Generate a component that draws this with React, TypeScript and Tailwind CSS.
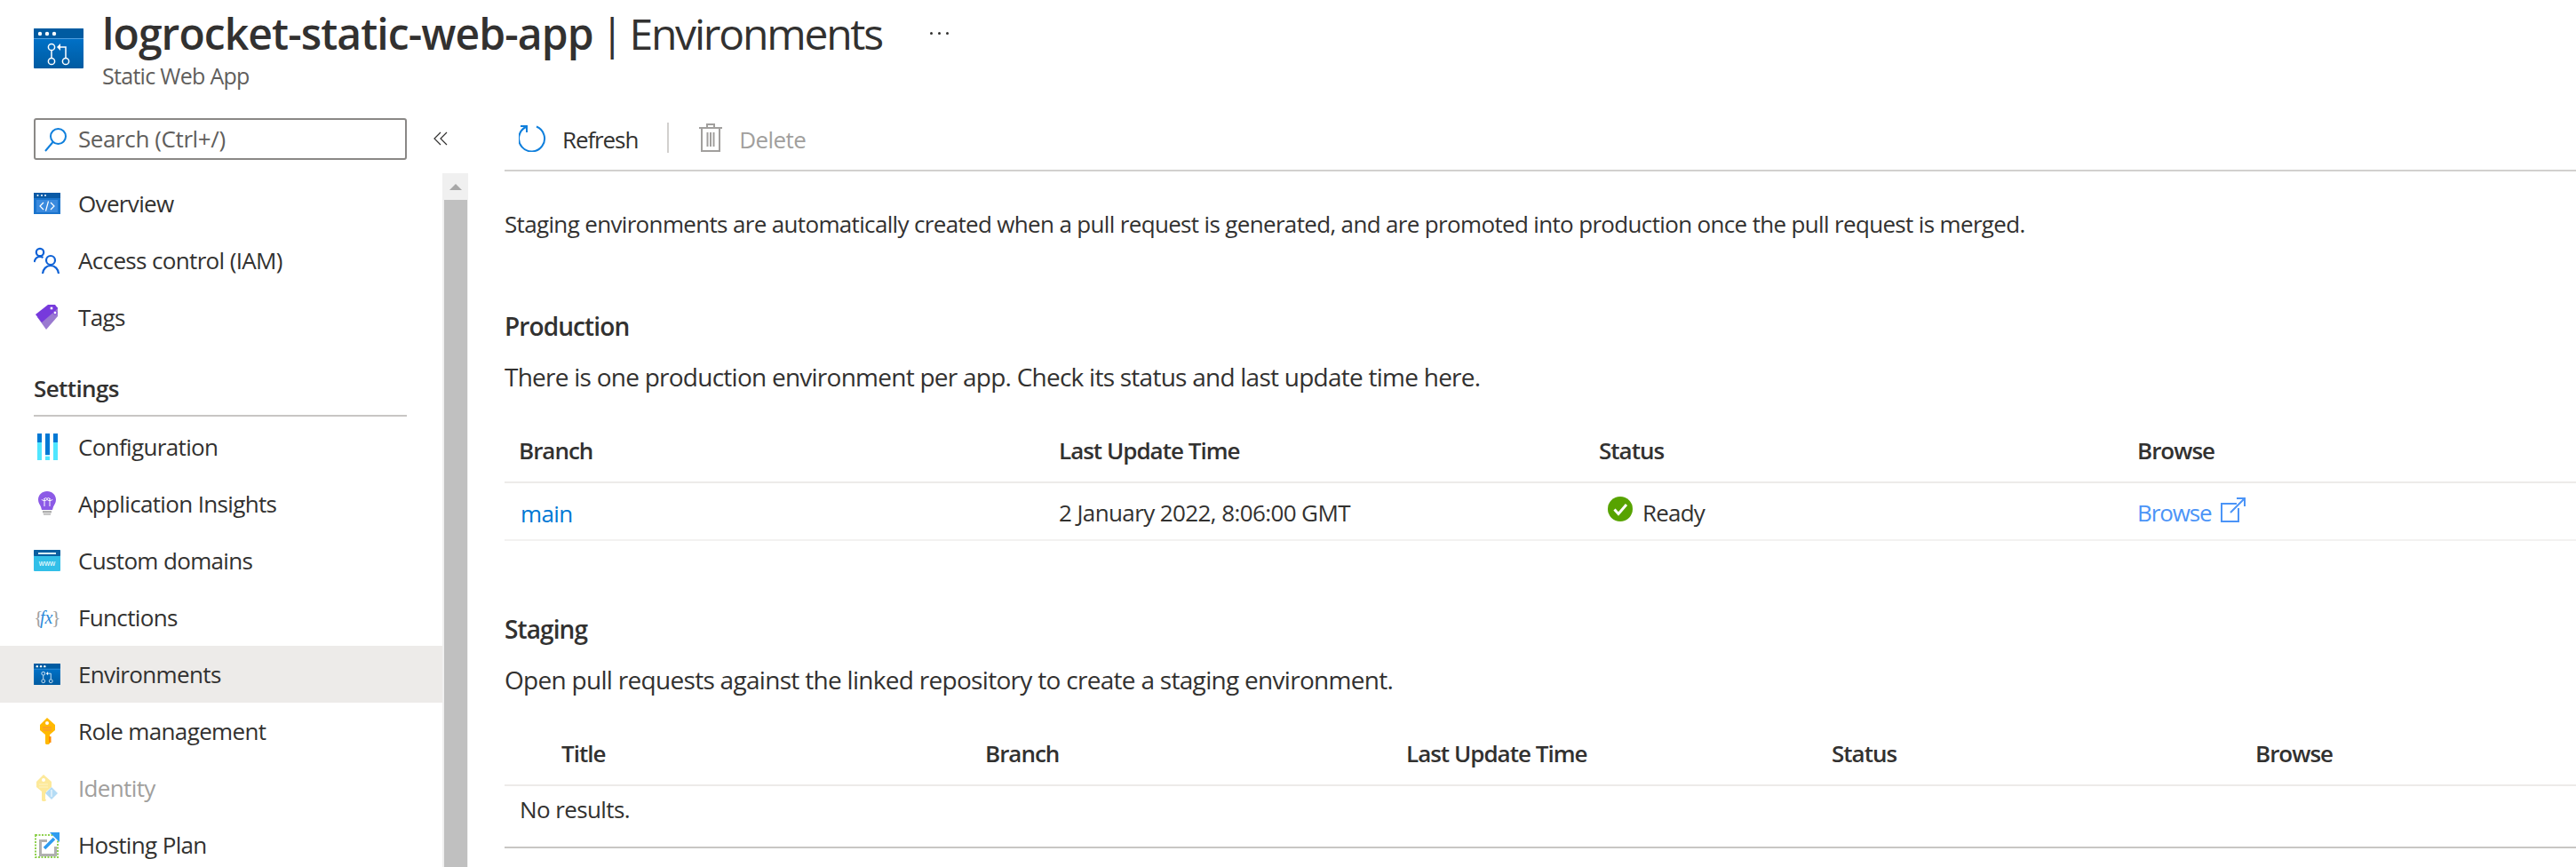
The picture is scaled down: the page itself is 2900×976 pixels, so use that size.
import React from "react";

const font = "font-['Open_Sans','Noto_Sans',sans-serif]";

const WindowBase: React.FC<{ children: React.ReactNode; grad: string }> = ({ children, grad }) => (
  <svg viewBox="0 0 56 45" className="w-full h-full">
    <defs>
      <linearGradient id={grad} x1="0" y1="0" x2="0" y2="1">
        <stop offset="0" stopColor="#0078d4" />
        <stop offset="1" stopColor="#005ba1" />
      </linearGradient>
    </defs>
    <rect x="0" y="0" width="56" height="45" rx="1" fill={`url(#${grad})`} />
    <rect x="0" y="0" width="56" height="11" rx="1" fill="#005ba1" />
    <rect x="0" y="11" width="56" height="1" fill="#50a0e0" />
    <circle cx="7" cy="6" r="2.200" fill="#fff" />
    <circle cx="15" cy="6" r="2.200" fill="#fff" />
    <circle cx="23" cy="6" r="2.200" fill="#fff" />
    {children}
  </svg>
);

const PullRequest = () => (
  <g fill="none" stroke="#fff" strokeWidth="1.5">
    <circle cx="20" cy="21" r="3.6" />
    <circle cx="20" cy="37" r="3.6" />
    <circle cx="36" cy="37" r="3.6" />
    <path d="M20 25v8M36 33V21h-9" />
    <path d="M30 17l-4 4 4 4" fill="#fff" stroke="none" />
  </g>
);

const EnvIcon: React.FC<{ id: string }> = ({ id }) => (
  <WindowBase grad={id}>
    <PullRequest />
  </WindowBase>
);

const OverviewIcon = () => (
  <svg viewBox="0 0 30 24" className="w-full h-full">
    <rect width="30" height="24" fill="#1b74cc" />
    <rect width="30" height="6" fill="#0a5aa6" />
    <rect x="3" y="8" width="24" height="14" fill="#3a8ade" />
    <circle cx="4.500" cy="3" r="1" fill="#fff" />
    <circle cx="9" cy="3" r="1" fill="#fff" />
    <circle cx="13" cy="3" r="1" fill="#fff" />
    <path d="M11 11l-4 4 4 4M19 11l4 4-4 4M16.500 9.500l-3 11" fill="none" stroke="#fff" strokeWidth="1.2" />
  </svg>
);

const AccessIcon = () => (
  <svg viewBox="0 0 30 30" className="w-full h-full" fill="none" stroke="#0f62d6" strokeWidth="2.2">
    <circle cx="7" cy="6" r="4.200" />
    <path d="M0.500 17c1-4 3-6 6.500-6 1.500 0 2.500.3 3.500 1" />
    <circle cx="19" cy="15" r="5" />
    <path d="M10 30c.5-5 4-9 9-9s8.500 4 9 9" />
  </svg>
);

const TagsIcon = () => (
  <svg viewBox="0 0 30 30" className="w-full h-full">
    <path d="M4 15L17 4h10v10L14 29z" fill="#9a7ad0" />
    <path d="M2 12L16 1h8l3 4-3 3L9 21z" fill="#773adc" />
    <circle cx="20" cy="5" r="2" fill="#fff" stroke="#773adc" />
    <circle cx="24" cy="10" r="2" fill="#fff" stroke="#773adc" />
  </svg>
);

const ConfigIcon = () => (
  <svg viewBox="0 0 30 30" className="w-full h-full">
    <rect x="4" y="0" width="5" height="30" fill="#50e6ff" />
    <rect x="4" y="0" width="5" height="10" fill="#0078d4" />
    <rect x="13" y="0" width="5" height="24" fill="#0078d4" />
    <rect x="13" y="24" width="5" height="2" fill="#c3f1ff" />
    <rect x="13" y="26" width="5" height="4" fill="#50e6ff" />
    <rect x="22" y="0" width="5" height="30" fill="#50e6ff" />
    <rect x="22" y="0" width="5" height="10" fill="#0078d4" />
  </svg>
);

const InsightsIcon = () => (
  <svg viewBox="0 0 30 30" className="w-full h-full">
    <path d="M15 1c-5.500 0-10 4-10 9.500 0 3.500 2 5.500 3 8 .5 1.200.5 2.500 1 3.500h12c.5-1 .5-2.300 1-3.500 1-2.500 3-4.500 3-8C25 5 20.500 1 15 1z" fill="#8c5ae6" />
    <path d="M12 9v9M18 9v9M9 10c0 2 6 2 6 0s-3-2-3 0M21 10c0 2-6 2-6 0s3-2 3 0" fill="none" stroke="#fff" strokeWidth="1" />
    <rect x="10" y="23" width="10" height="2.500" fill="#b0b0b0" />
    <rect x="11" y="26" width="8" height="2" fill="#c8c8c8" />
  </svg>
);

const DomainsIcon = () => (
  <svg viewBox="0 0 30 24" className="w-full h-full">
    <rect width="30" height="24" rx="1" fill="#32bfe8" />
    <rect width="30" height="7" rx="1" fill="#0a5fa0" />
    <rect x="5" y="3" width="20" height="2" fill="#d8eefa" />
    <text x="15" y="18" textAnchor="middle" fontSize="8.500" fill="#fff" fontFamily="'Liberation Sans',sans-serif">www</text>
  </svg>
);

const FunctionsIcon = () => (
  <svg viewBox="0 0 30 26" className="w-full h-full">
    <text x="0" y="20" fontSize="22" fill="#a0a0a0" fontFamily="'Liberation Serif',serif">{"{"}</text>
    <text x="20" y="20" fontSize="22" fill="#a0a0a0" fontFamily="'Liberation Serif',serif">{"}"}</text>
    <text x="7" y="20" fontSize="20" fontStyle="italic" fill="#2b88d8" fontFamily="'Liberation Serif',serif">fx</text>
  </svg>
);

const KeyShape: React.FC<{ light?: boolean }> = ({ light }) => (
  <g>
    <path d="M13 0l9 8v6l-6 5v10l-3 2-2-2V19L5 14V8z" fill={light ? "#fde99a" : "#ffb900"} />
    <circle cx="13" cy="6" r="2" fill="#fff" />
    <path d="M8 11h10M8 14h10" stroke={light ? "#fdf3c4" : "#f7894a"} strokeWidth="1.2" />
    <rect x="15" y="21" width="2.500" height="7" fill={light ? "#fff" : "#ff8c00"} />
  </g>
);

const RoleIcon = () => (
  <svg viewBox="0 0 30 30" className="w-full h-full"><g transform="translate(2 0)"><KeyShape /></g></svg>
);

const IdentityIcon = () => (
  <svg viewBox="0 0 30 30" className="w-full h-full">
    <g transform="translate(-2 0)"><KeyShape light /></g>
    <path d="M20 14l7 7-7 7-7-7z" fill="#b5dcf5" />
    <path d="M20 17v8" stroke="#fff" strokeWidth="1" />
  </svg>
);

const HostingIcon = () => (
  <svg viewBox="0 0 30 30" className="w-full h-full">
    <rect x="2" y="4" width="25" height="25" fill="none" stroke="#8fd14f" strokeWidth="2" strokeDasharray="2 1.500" />
    <path d="M6 9h9v3H9v13h14v-8h3v11H6z" fill="#b0b0b0" />
    <path d="M12 19l11-11" stroke="#2f9cf0" strokeWidth="3.500" />
    <path d="M18 1h11v11z" fill="#2f9cf0" />
  </svg>
);

type NavItem = { label: string; icon: React.ReactNode; h?: string; active?: boolean; disabled?: boolean };

const topItems: NavItem[] = [
  { label: "Overview", icon: <OverviewIcon />, h: "h-[24px]" },
  { label: "Access control (IAM)", icon: <AccessIcon />, h: "h-[30px]" },
  { label: "Tags", icon: <TagsIcon />, h: "h-[30px]" },
];

const settingsItems: NavItem[] = [
  { label: "Configuration", icon: <ConfigIcon />, h: "h-[30px]" },
  { label: "Application Insights", icon: <InsightsIcon />, h: "h-[30px]" },
  { label: "Custom domains", icon: <DomainsIcon />, h: "h-[24px]" },
  { label: "Functions", icon: <FunctionsIcon />, h: "h-[26px]" },
  { label: "Environments", icon: <EnvIcon id="navenv" />, h: "h-[24px]", active: true },
  { label: "Role management", icon: <RoleIcon />, h: "h-[30px]" },
  { label: "Identity", icon: <IdentityIcon />, h: "h-[30px]", disabled: true },
  { label: "Hosting Plan", icon: <HostingIcon />, h: "h-[30px]" },
];

const NavRow: React.FC<{ item: NavItem }> = ({ item }) => (
  <div className={`h-16 shrink-0 flex items-center pl-[38px] ${item.active ? "bg-[#edebe9]" : ""}`}>
    <span className={`w-[30px] shrink-0 ${item.h}`}>{item.icon}</span>
    <span className={`ml-[20px] text-[26px] tracking-[-0.65px] ${item.disabled ? "text-[#a19f9d]" : "text-[#323130]"}`}>
      {item.label}
    </span>
  </div>
);

const Sidebar = () => (
  <aside className="w-[527px] shrink-0 flex flex-col">
    <div className="h-[62px] flex items-start pl-[38px]">
      <div className="w-[420px] h-[47px] border-2 border-[#8a8886] rounded-[3px] flex items-center pl-[10px]">
        <svg viewBox="0 0 26 28" className="w-[26px] h-[28px]" fill="none" stroke="#0f7fdc" strokeWidth="2">
          <circle cx="15.500" cy="10.500" r="8.500" />
          <path d="M9.500 17L1 27" />
        </svg>
        <span className="ml-[12px] text-[26px] tracking-[-0.4px] text-[#605e5c]">Search (Ctrl+/)</span>
      </div>
      <svg viewBox="0 0 16 16" className="ml-[30px] mt-[15px] w-[16px] h-[16px]" fill="none" stroke="#323130" strokeWidth="1.2">
        <path d="M8 1L1 8l7 7M15 1L8 8l7 7" />
      </svg>
    </div>
    <div className="flex flex-1 min-h-0">
      <nav className="w-[498px] shrink-0 pt-[2px] overflow-hidden">
        {topItems.map((item) => (
          <NavRow key={item.label} item={item} />
        ))}
        <div className="ml-[38px] mr-[40px] h-[82px] flex flex-col justify-end pb-[2px]">
          <div className="text-[26px] tracking-[-0.6px] font-semibold text-[#323130] pb-[10px] border-b-2 border-[#c8c6c4]">
            Settings
          </div>
        </div>
        {settingsItems.map((item) => (
          <NavRow key={item.label} item={item} />
        ))}
      </nav>
      <div className="w-[29px] shrink-0 bg-[#f0f0f0] flex flex-col">
        <div className="h-[30px] flex items-center justify-center">
          <div className="w-0 h-0 border-x-[7px] border-x-transparent border-b-[7px] border-b-[#a8a8a8]" />
        </div>
        <div className="flex-1 ml-[2px] mr-[1px] bg-[#c0c0c0]" />
      </div>
    </div>
  </aside>
);

const Th: React.FC<{ children: React.ReactNode }> = ({ children }) => (
  <div className="pl-[16px] text-[26px] tracking-[-1px] font-semibold text-[#323130]">{children}</div>
);

const Production = () => (
  <section className="mt-[77px]">
    <h2 className="text-[28px] leading-[38px] tracking-[-0.9px] font-semibold text-[#323130]">Production</h2>
    <p className="mt-[19px] text-[28px] leading-[38px] tracking-[-0.75px] text-[#323130]">
      There is one production environment per app. Check its status and last update time here.
    </p>
    <div className="mt-[40px] h-[61px] grid grid-cols-[608px_608px_606px_1fr] items-center pb-[10px] border-b-2 border-[#edebe9]">
      <Th>Branch</Th>
      <Th>Last Update Time</Th>
      <Th>Status</Th>
      <Th>Browse</Th>
    </div>
    <div className="h-[65px] grid grid-cols-[608px_608px_606px_1fr] items-center pt-[4px] border-b-2 border-[#f3f2f1] text-[26px] tracking-[-0.6px] text-[#323130]">
      <a className="pl-[18px] mt-[2px] text-[#0078d4]">main</a>
      <div className="pl-[16px]">2 January 2022, 8:06:00 GMT</div>
      <div className="pl-[26px] flex items-center">
        <svg viewBox="0 0 28 28" className="w-[28px] h-[28px] -mt-[9px]">
          <circle cx="14" cy="14" r="14" fill="#57a300" />
          <path d="M7.500 14.500l4.500 5 9-10.500" fill="none" stroke="#fff" strokeWidth="3" />
        </svg>
        <span className="ml-[11px] tracking-[-0.8px]">Ready</span>
      </div>
      <div className="pl-[16px] flex items-center text-[#4b94f7]">
        <span className="tracking-[-1.1px]">Browse</span>
        <svg viewBox="0 0 28 28" className="ml-[10px] w-[28px] h-[28px] -mt-[7px]" fill="none" stroke="#4b94f7" strokeWidth="2">
          <path d="M18 7H1v20h19V12" />
          <path d="M11 17L27 1M18 1h9v9" />
        </svg>
      </div>
    </div>
  </section>
);

const Staging = () => (
  <section className="mt-[80px]">
    <h2 className="text-[28px] leading-[38px] tracking-[-0.9px] font-semibold text-[#323130]">Staging</h2>
    <p className="mt-[19px] text-[28px] leading-[38px] tracking-[-0.7px] text-[#323130]">
      Open pull requests against the linked repository to create a staging environment.
    </p>
    <div className="mt-[40px] h-[61px] grid grid-cols-[477px_474px_479px_477px_1fr] items-center pb-[10px] border-b-2 border-[#edebe9] pl-[48px]">
      <Th>Title</Th>
      <Th>Branch</Th>
      <Th>Last Update Time</Th>
      <Th>Status</Th>
      <Th>Browse</Th>
    </div>
    <div className="h-[70px] flex items-center pl-[17px] pb-[16px] border-b-2 border-[#c8c6c4] text-[26px] tracking-[-0.6px] text-[#323130]">
      No results.
    </div>
  </section>
);

const Toolbar = () => (
  <div className="h-[60px] shrink-0 flex items-center border-b-2 border-[#d2d0ce] pb-[14px]">
    <svg viewBox="0 0 32 32" className="ml-[16px] w-[32px] h-[32px]" fill="none" stroke="#0f7fdc" strokeWidth="2">
      <path d="M20 3.500A14.500 14.500 0 1 1 8 4" />
      <path d="M2 3h7v7" />
    </svg>
    <span className="ml-[17px] mt-[4px] text-[26px] tracking-[-1.1px] text-[#323130]">Refresh</span>
    <div className="ml-[33px] w-[2px] h-[34px] bg-[#d2d0ce]" />
    <svg viewBox="0 0 26 32" className="ml-[34px] w-[26px] h-[32px]" fill="none" stroke="#a19f9d" strokeWidth="2">
      <path d="M0 5h26M9 5V1h8v4M3 5v26h20V5M9.500 10v16M13 10v16M16.500 10v16" />
    </svg>
    <span className="ml-[19px] mt-[4px] text-[26px] tracking-[-0.6px] text-[#a19f9d]">Delete</span>
  </div>
);

const Header = () => (
  <header className="h-[133px] shrink-0 flex items-start pl-[38px]">
    <div className="mt-[32px] w-[56px] h-[45px] shrink-0">
      <EnvIcon id="headenv" />
    </div>
    <div className="ml-[21px]">
      <div className="flex items-center h-[76px]">
        <h1 className="text-[48px] tracking-[-2.2px] [word-spacing:-2px] text-[#323130] whitespace-nowrap">
          <span className="font-semibold tracking-[-0.9px]">logrocket-static-web-app</span> | Environments
        </h1>
        <span className="ml-[54px] flex gap-[6px] pb-[2px]">
          <i className="w-[3px] h-[3px] bg-[#323130] rounded-full" />
          <i className="w-[3px] h-[3px] bg-[#323130] rounded-full" />
          <i className="w-[3px] h-[3px] bg-[#323130] rounded-full" />
        </span>
      </div>
      <div className="text-[25px] leading-[18px] tracking-[-0.7px] text-[#605e5c]">Static Web App</div>
    </div>
  </header>
);

export default function App() {
  return (
    <div className={`w-[2900px] h-[976px] overflow-hidden bg-white flex flex-col ${font}`}>
      <Header />
      <div className="flex flex-1 min-h-0">
        <Sidebar />
        <main className="flex-1 ml-[41px] flex flex-col min-w-0">
          <Toolbar />
          <p className="mt-[40px] text-[26px] leading-[38px] tracking-[-0.66px] text-[#323130]">
            Staging environments are automatically created when a pull request is generated, and are promoted into production once the pull request is merged.
          </p>
          <Production />
          <Staging />
        </main>
      </div>
    </div>
  );
}
